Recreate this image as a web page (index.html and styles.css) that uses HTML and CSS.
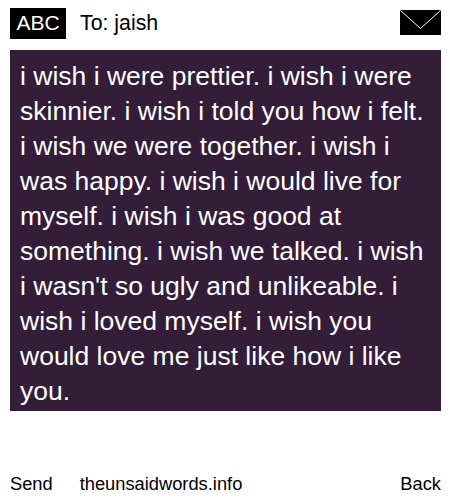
FILE: index.html
```html
<!DOCTYPE html>
<html lang="en">
<head>
<meta charset="utf-8">
<title>The Unsaid Words</title>
<link rel="stylesheet" href="styles.css">
</head>
<body>
<div class="page">
  <header class="top">
    <span class="abc">ABC</span>
    <span class="to">To: jaish</span>
    <svg class="mail" width="41" height="25" viewBox="0 0 41 25" aria-hidden="true">
      <rect width="41" height="25" fill="#000"/>
      <path d="M0.5 0.5 L20.5 18.5 L40.5 0.5" fill="none" stroke="#fff" stroke-width="1"/>
    </svg>
  </header>
  <main class="message">i wish i were prettier. i wish i were skinnier. i wish i told you how i felt. i wish we were together. i wish i was happy. i wish i would live for myself. i wish i was good at something. i wish we talked. i wish i wasn't so ugly and unlikeable. i wish i loved myself. i wish you would love me just like how i like you.</main>
  <footer class="bottom">
    <span class="send">Send</span>
    <span class="site">theunsaidwords.info</span>
    <span class="back">Back</span>
  </footer>
</div>
</body>
</html>
```
FILE: styles.css
```css
html, body {
  margin: 0;
  padding: 0;
  background: #fff;
}
.page {
  width: 450px;
  height: 500px;
  box-sizing: border-box;
  padding: 8px 9px 0 10px;
  display: flex;
  flex-direction: column;
  font-family: "Liberation Sans", Arial, sans-serif;
  color: #000;
}
.top {
  height: 31px;
  display: flex;
  align-items: flex-start;
  font-size: 21.3px;
}
.abc {
  width: 56px;
  height: 31px;
  line-height: 30px;
  font-size: 21px;
  background: #000;
  color: #fff;
  text-align: center;
}
.to {
  margin-left: 14px;
  line-height: 30px;
}
.mail {
  margin-left: auto;
  margin-top: 2px;
}
.message {
  margin-top: 11px;
  background: #331d38;
  color: #fff;
  font-size: 26.5px;
  line-height: 35px;
  padding: 9px 10px 4px;
  height: 361px;
  box-sizing: border-box;
}
.bottom {
  margin-top: auto;
  height: 28px;
  display: flex;
  font-size: 18.3px;
  line-height: 24px;
}
.site {
  margin-left: 27px;
}
.back {
  margin-left: auto;
}
```
